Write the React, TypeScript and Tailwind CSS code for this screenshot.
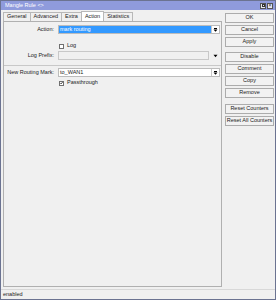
import React from "react";

const font = { fontFamily: '"Liberation Sans", Arial, sans-serif' };

function Btn({ label }: { label: string }) {
  return (
    <div className="h-[10px] w-[49px] border border-[#acacac] bg-[#f2f2f2] flex items-center justify-center text-[5.5px] leading-none text-[#1a1a1a]">
      {label}
    </div>
  );
}

function Arrow({ boxed = true }: { boxed?: boolean }) {
  return (
    <div
      className={`w-[8px] h-full flex items-center justify-center ${boxed ? "border-l border-[#c8c8c8] bg-white" : ""}`}
    >
      <svg width="5" height="4" viewBox="0 0 5 4">
        {boxed && <rect x="1" y="0" width="3" height="1" fill="#000" />}
        <path d="M0.5 1.5 L4.5 1.5 L2.5 3.8 Z" fill="#000" />
      </svg>
    </div>
  );
}

export default function App() {
  const tabs = ["General", "Advanced", "Extra", "Action", "Statistics"];
  return (
    <div className="w-[276px] h-[300px] flex flex-col bg-[#f0f0f0] border border-[#6b7391]" style={font}>
      {/* Title bar */}
      <div className="h-[9px] bg-[#8f9bdc] flex items-center justify-between pl-[4px] pr-[2px]">
        <span className="text-[5.5px] leading-none text-white">Mangle Rule &lt;&gt;</span>
        <div className="flex gap-[1px]">
          <div className="w-[6px] h-[6px] bg-[#e8e8f0] border border-[#555] flex items-center justify-center">
            <div className="w-[3px] h-[3px] border border-[#333]" />
          </div>
          <div className="w-[6px] h-[6px] bg-[#e8e8f0] border border-[#555] flex items-center justify-center text-[5px] leading-none text-[#222]">
            ×
          </div>
        </div>
      </div>
      {/* Body */}
      <div className="flex-1 flex min-h-0">
        {/* Left column */}
        <div className="flex flex-col pl-[2px] pt-[1px] w-[221px]">
          <div className="h-[10px] flex items-end">
            {tabs.map((t) => (
              <div
                key={t}
                className={`px-[3px] flex items-center text-[5.5px] leading-none text-[#1a1a1a] border border-[#b8b8b8] border-b-0 -mr-[1px] ${
                  t === "Action" ? "h-[10px] bg-white relative z-10" : "h-[9px] bg-[#f0f0f0]"
                }`}
              >
                {t}
              </div>
            ))}
          </div>
          <div className="flex-1 border border-[#b0b0b0] bg-[#f0f0f0] pt-[3px] pr-[1px] flex flex-col text-[5.5px] leading-none text-[#1a1a1a]">
            {/* Action */}
            <div className="flex items-center h-[9px]">
              <div className="w-[51px] text-right pr-[1px]">Action:</div>
              <div className="ml-[3px] flex-1 h-[9px] border border-[#bcbcbc] bg-white flex">
                <div className="flex-1 bg-[#3399ff] text-white flex items-center pl-[1px]">mark routing</div>
                <Arrow />
              </div>
            </div>
            {/* Log */}
            <div className="flex items-center h-[8px] mt-[8px]">
              <div className="w-[51px]" />
              <div className="ml-[4px] w-[5px] h-[5px] border border-[#707070] bg-white" />
              <span className="ml-[3px]">Log</span>
            </div>
            {/* Log prefix */}
            <div className="flex items-center h-[9px] mt-[1px]">
              <div className="w-[51px] text-right pr-[1px]">Log Prefix:</div>
              <div className="ml-[3px] w-[151px] h-[9px] border border-[#c8c8c8] bg-[#f0f0f0]" />
              <div className="ml-[2px] flex-1 flex justify-center">
                <svg width="5" height="4" viewBox="0 0 5 4">
                  <path d="M0.5 0.8 L4.5 0.8 L2.5 3.2 Z" fill="#000" />
                </svg>
              </div>
            </div>
            <div className="h-[1px] bg-[#c8c8c8] mt-[5px] -mr-[1px]" />
            {/* New Routing Mark */}
            <div className="flex items-center h-[9px] mt-[2px]">
              <div className="w-[51px] text-right pr-[1px] whitespace-nowrap">New Routing Mark:</div>
              <div className="ml-[3px] flex-1 h-[9px] border border-[#bcbcbc] bg-white flex">
                <div className="flex-1 flex items-center pl-[1px]">to_WAN1</div>
                <Arrow />
              </div>
            </div>
            {/* Passthrough */}
            <div className="flex items-center h-[8px] mt-[2px]">
              <div className="w-[51px]" />
              <div className="ml-[4px] w-[5px] h-[5px] border border-[#707070] bg-white flex items-center justify-center">
                <svg width="4" height="4" viewBox="0 0 4 4">
                  <path d="M0.4 2 L1.5 3.2 L3.6 0.6" stroke="#000" strokeWidth="0.9" fill="none" />
                </svg>
              </div>
              <span className="ml-[3px]">Passthrough</span>
            </div>
          </div>
        </div>
        {/* Right column */}
        <div className="flex flex-col pl-[3px] pt-[3px] gap-[2px]">
          <Btn label="OK" />
          <Btn label="Cancel" />
          <Btn label="Apply" />
          <div className="h-[1px]" />
          <Btn label="Disable" />
          <Btn label="Comment" />
          <Btn label="Copy" />
          <Btn label="Remove" />
          <div className="h-[2px]" />
          <Btn label="Reset Counters" />
          <Btn label="Reset All Counters" />
        </div>
      </div>
      {/* Status bar */}
      <div className="h-[10px] mt-[2px] border-t border-[#d8d8d8] flex items-center pl-[2px] text-[5.5px] leading-none text-[#1a1a1a]">
        enabled
      </div>
    </div>
  );
}
